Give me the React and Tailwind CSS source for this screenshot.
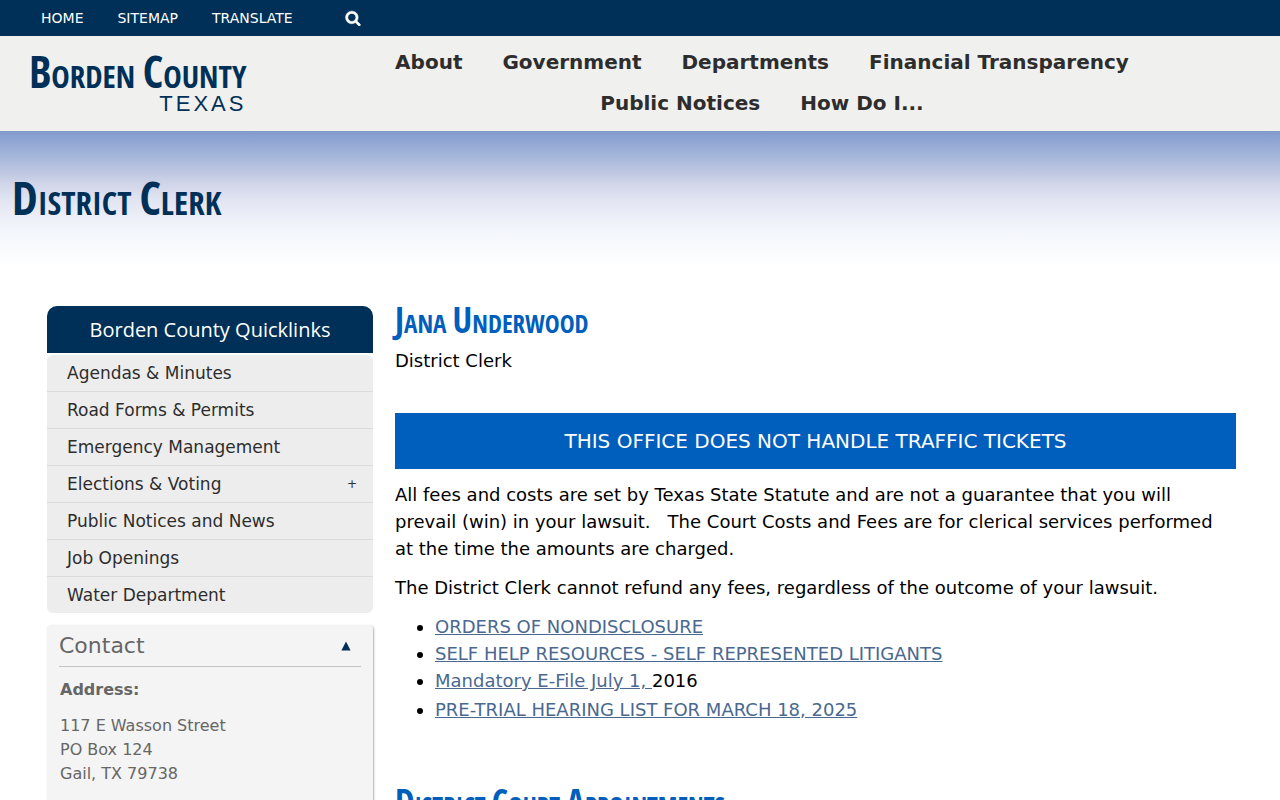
import React, { useState } from 'react';

const topLinks = ['Home', 'Sitemap', 'Translate'];

const navLinks = [
  'About',
  'Government',
  'Departments',
  'Financial Transparency',
  'Public Notices',
  'How Do I...',
];

const quicklinks = [
  { label: 'Agendas & Minutes' },
  { label: 'Road Forms & Permits' },
  { label: 'Emergency Management' },
  { label: 'Elections & Voting', expandable: true },
  { label: 'Public Notices and News' },
  { label: 'Job Openings' },
  { label: 'Water Department' },
];

const resources = [
  { link: 'ORDERS OF NONDISCLOSURE' },
  { link: 'SELF HELP RESOURCES - SELF REPRESENTED LITIGANTS' },
  { link: 'Mandatory E-File July 1, ', after: '2016' },
  { link: 'PRE-TRIAL HEARING LIST FOR MARCH 18, 2025' },
];

const displaySizes = {
  logo: { text: 'text-[31px] leading-10', initial: 'first-letter:text-[44px]' },
  lg: { text: 'text-[33px] leading-[54px]', initial: 'first-letter:text-[46px]' },
  md: { text: 'text-[25px] leading-[44px]', initial: 'first-letter:text-[35px]' },
};

// Condensed caps with a taller first letter on each word
function DisplayText({ children, size = 'lg' }) {
  const { text, initial } = displaySizes[size];

  return (
    <span className={`block whitespace-nowrap font-['Open_Sans_Condensed','DejaVu_Sans_Condensed',sans-serif] font-bold ${text}`}>
      {children.split(' ').map((word, i) => (
        <React.Fragment key={i}>
          {i > 0 && ' '}
          <span className={`inline-block uppercase first-letter:leading-[0px] ${initial}`}>{word}</span>
        </React.Fragment>
      ))}
    </span>
  );
}

function SearchIcon() {
  return (
    <svg
      width="16"
      height="16"
      viewBox="0 0 1792 1792"
      fill="currentColor"
      stroke="currentColor"
      strokeWidth="60"
    >
      <path d="M1216 832q0-185-131.500-316.500t-316.500-131.500-316.500 131.500-131.500 316.500 131.500 316.500 316.500 131.500 316.500-131.500 131.500-316.500zM1728 1664q0 52-38 90t-90 38q-54 0-90-38l-343-342q-179 124-399 124-143 0-273.500-55.500t-225-150-150-225-55.500-273.500 55.500-273.500 150-225 225-150 273.500-55.500 273.500 55.500 225 150 150 225 55.500 273.500q0 220-124 399l343 343q37 37 37 90z" />
    </svg>
  );
}

function TopBar() {
  return (
    <div className="flex h-9 items-center bg-[#003057] pl-[41px] text-sm text-white">
      <ul className="flex gap-[34px]">
        {topLinks.map((label) => (
          <li key={label}>
            <a href="#" className="uppercase">{label}</a>
          </li>
        ))}
      </ul>
      <button type="button" aria-label="Search" className="ml-[52px]">
        <SearchIcon />
      </button>
    </div>
  );
}

function Header() {
  return (
    <header className="flex bg-[#f0f0ee] pb-[7px] pt-1.5">
      <div className="w-[342px] shrink-0 pl-[29px] pt-3.5">
        <a href="#" className="flex w-fit flex-col items-end text-[#003057]">
          <DisplayText size="logo">Borden County</DisplayText>
          <span className="font-['Liberation_Sans',sans-serif] text-[22px] leading-[16px] tracking-[3px]">
            TEXAS
          </span>
        </a>
      </div>
      <nav className="flex-1 pr-[98px]">
        <ul className="flex flex-wrap justify-center">
          {navLinks.map((label) => (
            <li key={label} className="px-5">
              <a href="#" className="text-xl font-bold leading-[41px] text-[#2d2d2d]">{label}</a>
            </li>
          ))}
        </ul>
      </nav>
    </header>
  );
}

function Quicklinks() {
  return (
    <section>
      <h2 className="rounded-t-[10px] bg-[#003057] text-center font-['Open_Sans',sans-serif] text-xl leading-[47px] text-white">
        Borden County Quicklinks
      </h2>
      <ul className="mt-0.5 divide-y divide-[#dcdcdc] rounded-md bg-[#ededed]">
        {quicklinks.map(({ label, expandable }) => (
          <li key={label} className="flex items-center justify-between pl-5 pr-4 text-[17px] leading-9 text-[#2d2d2d]">
            <a href="#">{label}</a>
            {expandable && (
              <button type="button" aria-label={`Expand ${label}`} className="text-xs font-medium">+</button>
            )}
          </li>
        ))}
      </ul>
    </section>
  );
}

function Contact() {
  const [open, setOpen] = useState(true);

  return (
    <section className="mt-3 rounded-sm bg-[#f4f4f4] px-3 pb-6 text-[#666] shadow-[1px_1px_2px_rgba(0,0,0,0.3)]">
      <div className="flex items-center justify-between border-b border-[#c4c4c4] pr-2.5">
        <h2 className="text-[22px] leading-[41px]">Contact</h2>
        <button
          type="button"
          aria-label="Toggle contact"
          aria-expanded={open}
          onClick={() => setOpen(!open)}
        >
          <svg width="10" height="10" viewBox="0 0 10 10" className="fill-[#003057]">
            <path d={open ? 'M5 0.5L9.6 9.5H0.4Z' : 'M5 9.5L0.4 0.5H9.6Z'} />
          </svg>
        </button>
      </div>
      {open && (
        <div className="px-px pt-[11px] text-base">
          <p className="mb-3 font-bold">Address:</p>
          <address className="not-italic">
            117 E Wasson Street
            <br />
            PO Box 124
            <br />
            Gail, TX 79738
          </address>
        </div>
      )}
    </section>
  );
}

export default function App() {
  return (
    <div className="h-screen overflow-hidden bg-white font-['DejaVu_Sans',sans-serif] text-black">
      <TopBar />
      <Header />
      <div className="bg-[linear-gradient(#819bcd_0px,#a9b9dc_28px,#d2d6e9_54px,#e4e7f3_72px,#f3f6fb_100px,#ffffff_136px)] px-3 pb-[59px] pt-[45px]">
        <h1 className="text-[#003057]">
          <DisplayText>District Clerk</DisplayText>
        </h1>
      </div>
      <div className="flex gap-[22px] pl-[47px] pr-11">
        <aside className="w-[326px] shrink-0 pt-[17px]">
          <Quicklinks />
          <Contact />
        </aside>
        <main className="min-w-0 flex-1 pt-3 text-lg leading-[27px]">
          <h2 className="text-[#005ebd]">
            <DisplayText size="md">Jana Underwood</DisplayText>
          </h2>
          <p className="mt-0.5">District Clerk</p>
          <p className="mb-3 mt-[39px] bg-[#005ebd] text-center text-xl leading-[56px] text-white">
            THIS OFFICE DOES NOT HANDLE TRAFFIC TICKETS
          </p>
          <p className="mb-3">
            All fees and costs are set by Texas State Statute and are not a guarantee that you will
            prevail (win) in your lawsuit. &nbsp; The Court Costs and Fees are for clerical services
            performed at the time the amounts are charged.
          </p>
          <p className="mb-3">
            The District Clerk cannot refund any fees, regardless of the outcome of your lawsuit.
          </p>
          <ul className="mb-[60px] list-disc pl-10">
            {resources.map(({ link, after }) => (
              <li key={link} className="last:pt-0.5">
                <a href="#" className="text-[#4a6890] underline">{link}</a>
                {after}
              </li>
            ))}
          </ul>
          <h2 className="text-[#005ebd]">
            <DisplayText size="md">District Court Appointments</DisplayText>
          </h2>
        </main>
      </div>
    </div>
  );
}
